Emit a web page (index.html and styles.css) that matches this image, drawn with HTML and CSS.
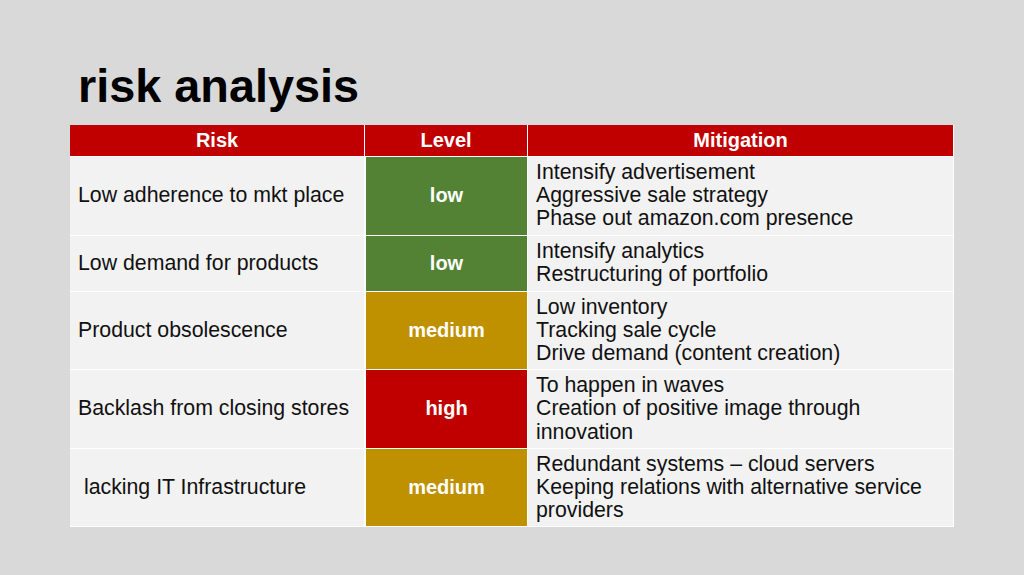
FILE: index.html
```html
<!DOCTYPE html>
<html>
<head>
<meta charset="utf-8">
<link rel="stylesheet" href="styles.css">
</head>
<body>
<div class="slide">
  <h1 class="title">risk analysis</h1>
  <table class="risk-table">
    <colgroup>
      <col class="c-risk">
      <col class="c-level">
      <col class="c-mit">
    </colgroup>
    <thead>
      <tr><th>Risk</th><th>Level</th><th>Mitigation</th></tr>
    </thead>
    <tbody>
      <tr>
        <td class="risk">Low adherence to mkt place</td>
        <td class="level low">low</td>
        <td class="mit">Intensify advertisement<br>Aggressive sale strategy<br>Phase out amazon.com presence</td>
      </tr>
      <tr>
        <td class="risk">Low demand for products</td>
        <td class="level low">low</td>
        <td class="mit">Intensify analytics<br>Restructuring of portfolio</td>
      </tr>
      <tr>
        <td class="risk">Product obsolescence</td>
        <td class="level medium">medium</td>
        <td class="mit">Low inventory<br>Tracking sale cycle<br>Drive demand (content creation)</td>
      </tr>
      <tr>
        <td class="risk">Backlash from closing stores</td>
        <td class="level high">high</td>
        <td class="mit">To happen in waves<br>Creation of positive image through<br>innovation</td>
      </tr>
      <tr>
        <td class="risk">&nbsp;lacking IT Infrastructure</td>
        <td class="level medium">medium</td>
        <td class="mit">Redundant systems – cloud servers<br>Keeping relations with alternative service<br>providers</td>
      </tr>
    </tbody>
  </table>
</div>
</body>
</html>
```
FILE: styles.css
```css
html, body {
  margin: 0;
  padding: 0;
  background: #d9d9d9;
}
body {
  width: 1024px;
  height: 575px;
  overflow: hidden;
  font-family: "Liberation Sans", Arial, sans-serif;
}
.slide {
  padding: 60px 0 0 70px;
}
.title {
  margin: 0 0 12px 0;
  padding-left: 8px;
  font-size: 46.8px;
  font-weight: bold;
  color: #000;
  line-height: 53px;
}
.risk-table {
  border-collapse: separate;
  border-spacing: 0;
  width: 884px;
  table-layout: fixed;
  font-size: 21.3px;
  color: #111;
}
.c-risk { width: 295px; }
.c-level { width: 163px; }
.c-mit { width: 426px; }
.risk-table th,
.risk-table td {
  border: 1px solid #fff;
  border-width: 0 1px 1px 0;
  padding: 4px 8px;
  line-height: 23.2px;
  vertical-align: middle;
}
.risk-table th {
  background: #c00000;
  color: #fff;
  font-size: 20px;
  font-weight: bold;
  text-align: center;
  padding: 4px 8px;
  line-height: 23px;
}
.risk-table td {
  background: #f2f2f2;
  text-align: left;
}
.risk-table td.level {
  color: #fff;
  font-weight: bold;
  text-align: center;
  font-size: 20px;
  border-left: 1px solid #fff;
}
.risk-table td.low { background: #548235; }
.risk-table td.medium { background: #bf9000; }
.risk-table td.high { background: #c00000; }
.risk-table td.risk {
  height: 47px;
}
```
